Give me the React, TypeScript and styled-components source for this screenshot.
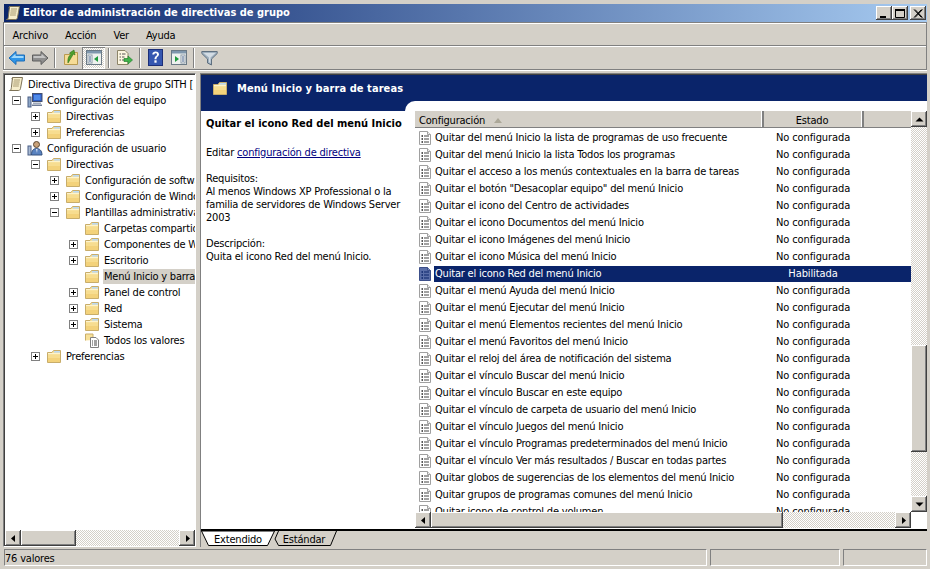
import React from 'react';
import styled, { createGlobalStyle, css } from 'styled-components';

const FONT = `"DejaVu Sans Condensed", "Noto Sans", "Liberation Sans", sans-serif`;

const Global = createGlobalStyle`
  html, body { margin: 0; padding: 0; background: #d4d0c8; }
  * { box-sizing: border-box; }
`;

const raised = css`
  background-color: #d4d0c8;
  box-shadow: inset -1px -1px 0 #404040, inset 1px 1px 0 #ffffff, inset -2px -2px 0 #808080, inset 2px 2px 0 #d4d0c8;
`;
const dither = css`
  background: repeating-conic-gradient(#d4d0c8 0 25%, #ffffff 0 50%) 0 0 / 2px 2px;
`;

const Window = styled.div`
  width: 930px; height: 569px; background: #d4d0c8; padding: 4px 3px 0 3px;
  display: flex; flex-direction: column; overflow: hidden;
  font-family: ${FONT}; font-size: 11px; letter-spacing: -0.2px; color: #000;
`;
const TitleBar = styled.div`
  height: 18px; margin-left: 1px; flex: none; display: flex; align-items: center; padding: 0 1px 0 1px;
  background: linear-gradient(90deg, #0a246a 0%, #a6caf0 100%);
`;
const TitleText = styled.span`
  color: #fff; font-weight: 700; font-size: 11px; letter-spacing: 0; margin-left: 2px; padding-bottom: 2px; flex: 1; white-space: nowrap;
`;
const CaptionBtn = styled.div`
  ${raised}; width: 16px; height: 14px; margin-left: ${p => (p.$gap ? 2 : 0)}px; display: flex; align-items: center; justify-content: center;
`;
const Bar = styled.div`
  height: 24px; flex: none; display: flex; align-items: center;
  border: 1px solid #808080; box-shadow: inset 1px 1px 0 #fff, 0 1px 0 #fff;
`;
const MenuBar = styled(Bar)`
  padding-left: 0;
`;
const MenuItem = styled.span`
  padding: 2px 8.5px 0; white-space: nowrap;
`;
const ToolBar = styled(Bar)`
  padding-left: 1px; border-top: none; height: 24px;
`;
const ToolBtn = styled.div`
  width: 23px; height: 22px; display: flex; align-items: center; justify-content: center;
  ${p => p.$pressed && css`
    ${dither};
    box-shadow: inset 1px 1px 0 #808080, inset -1px -1px 0 #fff;
  `}
`;
const ToolSep = styled.div`
  width: 2px; height: 20px; margin: 0 3px; border-left: 1px solid #808080; border-right: 1px solid #fff;
`;
const Main = styled.div`
  flex: none; height: 474px; margin-top: 3px; display: flex;
`;
const TreePane = styled.div`
  width: 193px; flex: none; display: flex; flex-direction: column;
  border: 1px solid #fff; border-top-color: #808080; border-left-color: #808080;
  box-shadow: inset 1px 1px 0 #404040;
  padding: 1px 0 0 1px;
`;
const TreeList = styled.div`
  flex: 1; background: #fff; padding-top: 1px; overflow: hidden;
`;
const TreeRow = styled.div`
  height: 16px; display: flex; align-items: center; white-space: nowrap;
  padding-left: ${p => (p.$level === 0 ? 3 : 7 + (p.$level - 1) * 19)}px;
`;
const ToggleSlot = styled.div`
  width: 9px; height: 9px; margin-right: 6px; flex: none; position: relative;
  ${p => p.$kind && css`
    border: 1px solid #808080; background: #fff;
    &::before { content: ''; position: absolute; left: 1px; top: 3px; width: 5px; height: 1px; background: #000; }
  `}
  ${p => p.$kind === 'plus' && css`
    &::after { content: ''; position: absolute; left: 3px; top: 1px; width: 1px; height: 5px; background: #000; }
  `}
`;
const TreeIcon = styled.div`
  width: 16px; height: 16px; flex: none; display: flex; align-items: center; justify-content: center;
`;
const TreeLabel = styled.span`
  margin-left: 3px; padding: 0 12px 0 1px; line-height: 15px; height: 15px; flex: ${p => (p.$sel ? 1 : 'none')};
  background: ${p => (p.$sel ? '#d4d0c8' : 'transparent')};
`;
const HScroll = styled.div`
  height: 16px; flex: none; display: flex; ${dither};
`;
const ArrowBtn = styled.div`
  ${raised}; width: 16px; height: 16px; flex: none; display: flex; align-items: center; justify-content: center;
`;
const HThumb = styled.div`
  ${raised}; height: 16px; flex: none; width: ${p => p.$w}px;
`;
const Spacer = styled.div`
  flex: 1;
`;
const Splitter = styled.div`
  width: 4px; flex: none;
`;
const RightPane = styled.div`
  flex: 1; min-width: 0; display: flex; flex-direction: column;
  border-left: 1px solid #808080; border-top: 1px solid #808080;
`;
const Banner = styled.div`
  height: 27px; flex: none; background: #0a246a; border-top: 1px solid #404040; display: flex; align-items: center;
  padding-left: 11px; color: #fff; font-weight: 700; font-size: 11px; letter-spacing: 0.07px;
`;
const BannerText = styled.span`
  margin-left: 9px; padding-top: 1px;
`;
const Body = styled.div`
  flex: none; height: 428px; display: flex;
`;
const DescPane = styled.div`
  width: 204px; flex: none; background: #fff; display: flex; flex-direction: column;
`;
const DescStrip = styled.div`
  height: 10px; background: #0a246a; flex: none;
`;
const DescContent = styled.div`
  padding: 6px 0 0 5px; line-height: 13px;
`;
const DescTitle = styled.div`
  font-weight: 700; letter-spacing: 0; white-space: nowrap;
`;
const DescPara = styled.div`
  margin-top: ${p => p.$mt}px;
`;
const DescLink = styled.a`
  color: #000080; text-decoration: underline;
`;
const ListOuter = styled.div`
  flex: 1; min-width: 0; background: #0a246a;
`;
const ListPanel = styled.div`
  height: 100%; background: #fff; border-top-left-radius: 10px; padding: 10px 0 0 10px; display: flex;
`;
const ListCol = styled.div`
  flex: 1; min-width: 0; display: flex; flex-direction: column; height: 417px;
`;
const Header = styled.div`
  height: 17px; flex: none; display: flex; background: #d4d0c8; border-bottom: 1px solid #808080;
`;
const HeadCell = styled.div`
  width: ${p => p.$w}px; flex: ${p => (p.$w ? 'none' : 1)}; display: flex; align-items: center;
  justify-content: ${p => (p.$center ? 'center' : 'flex-start')};
  padding: 3px ${p => (p.$center ? 2 : 0)}px 0 ${p => (p.$center ? 0 : 4)}px;
  border-right: ${p => (p.$last ? 'none' : '2px solid #808080')};
  box-shadow: ${p => (p.$last ? 'none' : 'inset -1px 0 0 #fff')};
`;
const SortMark = styled.span`
  width: 0; height: 0; margin-left: 9px; border-left: 4px solid transparent; border-right: 4px solid transparent; border-bottom: 5px solid #aca899;
`;
const Rows = styled.div`
  flex: 1; overflow: hidden; min-height: 0; padding-top: 1px;
`;
const Row = styled.div`
  height: 17px; display: flex; align-items: center; white-space: nowrap;
`;
const RowIcon = styled.div`
  width: 14px; height: 16px; margin-left: 3px; flex: none; display: flex; align-items: center; justify-content: center;
`;
const RowMain = styled.div`
  display: flex; flex: 1; height: 16px; align-items: center; margin-left: 2px; padding-left: 1px;
  background: ${p => (p.$sel ? '#0a246a' : 'transparent')};
  color: ${p => (p.$sel ? '#fff' : '#000')};
`;
const RowName = styled.span`
  width: 329px; flex: none;
`;
const RowStatus = styled.span`
  width: 98px; flex: none; text-align: center; letter-spacing: -0.1px;
`;
const VCol = styled.div`
  width: 16px; flex: none; display: flex; flex-direction: column; height: 401px;
`;
const VTrack = styled.div`
  flex: 1; display: flex; flex-direction: column; ${dither};
`;
const VThumb = styled.div`
  ${raised}; width: 16px; height: 107px; flex: none; margin-top: 218px;
`;
const TabStrip = styled.div`
  height: 18px; flex: none; border-top: 2px solid #000; display: flex; padding-left: 0;
`;
const Tab = styled.div`
  position: relative; height: 15px; width: ${p => p.$w}px; flex: none; margin-left: ${p => p.$ml || 0}px;
  display: flex; justify-content: center; align-items: center; padding-top: 2px;
`;
const TabShape = styled.svg`
  position: absolute; left: 0; top: 0;
`;
const TabLabel = styled.span`
  position: relative;
`;
const StatusBar = styled.div`
  display: flex; height: 17px; margin-top: 2px; flex: none; gap: 3px; padding: 0 0 0 1px;
`;
const StatusCell = styled.div`
  height: 17px; width: ${p => p.$w}px; flex: ${p => (p.$w ? 'none' : 1)};
  border: 1px solid #fff; border-top-color: #808080; border-left-color: #808080;
  display: flex; align-items: center; padding: 2px 0 0 0; white-space: nowrap;
`;

/* ---------- drawings ---------- */
const Folder = () => (
  <svg width="16" height="15" viewBox="0 0 16 15">
    <path d="M1.5 3.5V13.5H14.5V1.5H7.5L6 3.5Z" fill="#f8e19a" stroke="#c8ad6a" />
    <rect x="2" y="9" width="12" height="4" fill="#f3d27b" />
    <rect x="2" y="6" width="12" height="3" fill="#f7dd90" />
    <rect x="8" y="2" width="6" height="1.6" fill="#bcd9f2" />
    <rect x="2" y="4" width="12" height="1" fill="#fdf3cd" />
  </svg>
);
const Scroll = () => (
  <svg width="16" height="16" viewBox="0 0 16 16">
    <path d="M4.5 1.5H14.5L12.5 12.5C12 14.5 11 14.5 10 14.5H1.5C3 14.5 3.2 13 3.4 11.5Z" fill="#f6edcb" stroke="#7d7257" />
    <path d="M6 4H12M5.6 6H11.6M5.3 8H11.2M5 10H10.8" stroke="#a89a73" />
    <path d="M4.5 1.5C3.8 2 3.8 3.5 5 3.5" fill="none" stroke="#7d7257" />
  </svg>
);
const Computer = () => (
  <svg width="16" height="16" viewBox="0 0 16 16">
    <rect x="1" y="5" width="3" height="10" fill="#8fa8c8" stroke="#4a5f86" />
    <rect x="5.5" y="1.5" width="9.5" height="8" fill="#2c5bc4" stroke="#44506e" />
    <rect x="7" y="3" width="6.5" height="5" fill="#4f8ae8" />
    <path d="M6 10.5H14V12H6Z" fill="#9fa9bb" />
    <path d="M5 12.5H15V14H5Z" fill="#6f7c96" />
  </svg>
);
const UserIcon = () => (
  <svg width="16" height="16" viewBox="0 0 16 16">
    <rect x="1" y="6" width="3" height="9" fill="#a9bbd4" stroke="#4a5f86" />
    <circle cx="9.5" cy="4.5" r="3" fill="#c9a27a" stroke="#5b4630" />
    <path d="M4.5 15C4.5 10 7 8.5 9.5 8.5S15 10 15 15Z" fill="#5a83c0" stroke="#34507e" />
    <path d="M9 9H10.5L10 13Z" fill="#e8eef7" />
  </svg>
);
const ValuesIcon = () => (
  <svg width="16" height="16" viewBox="0 0 16 16">
    <path d="M1.5 8.5V2H9V8" fill="#f8e19a" stroke="#c8ad6a" />
    <path d="M6.5 5.5H12L14.5 8V15.5H6.5Z" fill="#fff" stroke="#808080" />
    <path d="M8 9H9M8 11H9M8 13H9M10 9H13M10 11H13M10 13H13" stroke="#444" />
  </svg>
);
const PolicyDoc = ({ sel }: { sel?: boolean }) => (
  <svg width="14" height="16" viewBox="0 0 14 16">
    <path d="M1.5 1.5H9.5L12.5 4.5V14.5H1.5Z" fill={sel ? '#5a6ea8' : '#fff'} stroke={sel ? '#3c4f8a' : '#a0a0a0'} />
    <path d="M9.5 1.5V4.5H12.5" fill={sel ? '#7a8cc0' : '#eee'} stroke={sel ? '#3c4f8a' : '#a0a0a0'} />
    <path d="M3.5 6H5M3.5 9H5M3.5 12H5" stroke={sel ? '#0a246a' : '#222'} strokeWidth="1.4" />
    <path d="M6 6H11M6 9H11M6 12H11" stroke={sel ? '#0a246a' : '#444'} />
  </svg>
);
const Tri = ({ dir }: { dir: 'l' | 'r' | 'u' | 'd' }) => {
  const d = { l: 'M6 1V8L2 4.5Z', r: 'M3 1V8L7 4.5Z', u: 'M0.5 6.5H8.5L4.5 2.5Z', d: 'M0.5 2.5H8.5L4.5 6.5Z' }[dir];
  return (
    <svg width="9" height="9" viewBox="0 0 9 9"><path d={d} fill="#000" /></svg>
  );
};
const ArrowIcon = ({ flip, c1, c2, line }: { flip?: boolean; c1: string; c2: string; line: string }) => (
  <svg width="18" height="16" viewBox="0 0 18 16" style={flip ? { transform: 'scaleX(-1)' } : undefined}>
    <path d="M1 8L8 1.5V5H16.5V11H8V14.5Z" fill={c1} stroke={line} strokeLinejoin="round" />
    <path d="M3 8L7.5 3.8V6H15.5V8H3Z" fill={c2} />
  </svg>
);
const UpFolder = () => (
  <svg width="16" height="17" viewBox="0 0 16 17">
    <path d="M1.5 5.5V15.5H14.5V3.5H8L7 5.5Z" fill="#f6dc96" stroke="#b89a50" />
    <path d="M5 14C4.5 9 6 6.5 8 5.5L6.5 4L11 1L12 6L10.5 5C9 7 7.5 10 5 14Z" fill="#4da02e" stroke="#2c7016" strokeWidth="0.6" />
  </svg>
);
const PaneLeft = ({ right }: { right?: boolean }) => (
  <svg width="16" height="15" viewBox="0 0 16 15">
    <rect x="0.5" y="0.5" width="15" height="14" fill="#eef1ee" stroke="#6b7a86" />
    <rect x="1" y="1" width="14" height="2.5" fill="#7f97ad" />
    {right ? (
      <>
        <rect x="10" y="5" width="4" height="8" fill="#fff" stroke="#8a9aa8" />
        <path d="M4 6L8 9L4 12Z" fill="#1f9b3c" />
        <path d="M11 7H13M11 9H13M11 11H13" stroke="#3c5b86" />
      </>
    ) : (
      <>
        <rect x="2" y="5" width="4" height="8" fill="#fff" stroke="#8a9aa8" />
        <path d="M12 6L8 9L12 12Z" fill="#1f9b3c" />
        <path d="M3 7H5M3 9H5M3 11H5" stroke="#3c5b86" />
      </>
    )}
  </svg>
);
const Export = () => (
  <svg width="17" height="17" viewBox="0 0 17 17">
    <path d="M1.5 1.5H9L12 4.5V15.5H1.5Z" fill="#fdf6e0" stroke="#8c8468" />
    <path d="M3.5 5H5M3.5 8H5M3.5 11H5M6 5H9.5M6 8H8.5M6 11H8.5" stroke="#555" />
    <path d="M8 9.5H12V7L16.5 11L12 15V12.5H8Z" fill="#3fb34a" stroke="#26832f" strokeWidth="0.7" />
  </svg>
);
const Help = () => (
  <svg width="15" height="17" viewBox="0 0 15 17">
    <rect x="0.5" y="0.5" width="14" height="16" fill="#3657b0" stroke="#1d2f78" />
    <path d="M4.3 5.5C4.3 3.2 6 2.5 7.6 2.5C9.6 2.5 11 3.6 11 5.3C11 7.6 8.5 7.6 8.5 10.2H6.5C6.5 7 9 7 9 5.4C9 4.6 8.4 4.2 7.6 4.2C6.7 4.2 6.3 4.8 6.3 5.5Z" fill="#fff" />
    <rect x="6.4" y="11.3" width="2.2" height="2.4" fill="#fff" />
  </svg>
);
const Funnel = () => (
  <svg width="17" height="16" viewBox="0 0 17 16">
    <path d="M0.8 1.5H16.2V3.5L10.5 9V15L6.5 13V9L0.8 3.5Z" fill="#9fb0bf" stroke="#5f7080" />
    <path d="M2.5 3H14.5L9.5 7.5V13L8 12.3V7.5Z" fill="#d3dce4" />
  </svg>
);

/* ---------- data ---------- */
type TreeItem = { level: number; toggle?: 'plus' | 'minus'; icon: 'scroll' | 'computer' | 'user' | 'folder' | 'values'; label: string; sel?: boolean };
const tree: TreeItem[] = [
  { level: 0, icon: 'scroll', label: 'Directiva Directiva de grupo SITH [' },
  { level: 1, toggle: 'minus', icon: 'computer', label: 'Configuración del equipo' },
  { level: 2, toggle: 'plus', icon: 'folder', label: 'Directivas' },
  { level: 2, toggle: 'plus', icon: 'folder', label: 'Preferencias' },
  { level: 1, toggle: 'minus', icon: 'user', label: 'Configuración de usuario' },
  { level: 2, toggle: 'minus', icon: 'folder', label: 'Directivas' },
  { level: 3, toggle: 'plus', icon: 'folder', label: 'Configuración de software' },
  { level: 3, toggle: 'plus', icon: 'folder', label: 'Configuración de Windows' },
  { level: 3, toggle: 'minus', icon: 'folder', label: 'Plantillas administrativas' },
  { level: 4, icon: 'folder', label: 'Carpetas compartidas' },
  { level: 4, toggle: 'plus', icon: 'folder', label: 'Componentes de Windows' },
  { level: 4, toggle: 'plus', icon: 'folder', label: 'Escritorio' },
  { level: 4, icon: 'folder', label: 'Menú Inicio y barra de tareas', sel: true },
  { level: 4, toggle: 'plus', icon: 'folder', label: 'Panel de control' },
  { level: 4, toggle: 'plus', icon: 'folder', label: 'Red' },
  { level: 4, toggle: 'plus', icon: 'folder', label: 'Sistema' },
  { level: 4, icon: 'values', label: 'Todos los valores' },
  { level: 2, toggle: 'plus', icon: 'folder', label: 'Preferencias' },
];
const icons = { scroll: Scroll, computer: Computer, user: UserIcon, folder: Folder, values: ValuesIcon };

const policies = [
  'Quitar del menú Inicio la lista de programas de uso frecuente',
  'Quitar del menú Inicio la lista Todos los programas',
  'Quitar el acceso a los menús contextuales en la barra de tareas',
  'Quitar el botón "Desacoplar equipo" del menú Inicio',
  'Quitar el icono del Centro de actividades',
  'Quitar el icono Documentos del menú Inicio',
  'Quitar el icono Imágenes del menú Inicio',
  'Quitar el icono Música del menú Inicio',
  'Quitar el icono Red del menú Inicio',
  'Quitar el menú Ayuda del menú Inicio',
  'Quitar el menú Ejecutar del menú Inicio',
  'Quitar el menú Elementos recientes del menú Inicio',
  'Quitar el menú Favoritos del menú Inicio',
  'Quitar el reloj del área de notificación del sistema',
  'Quitar el vínculo Buscar del menú Inicio',
  'Quitar el vínculo Buscar en este equipo',
  'Quitar el vínculo de carpeta de usuario del menú Inicio',
  'Quitar el vínculo Juegos del menú Inicio',
  'Quitar el vínculo Programas predeterminados del menú Inicio',
  'Quitar el vínculo Ver más resultados / Buscar en todas partes',
  'Quitar globos de sugerencias de los elementos del menú Inicio',
  'Quitar grupos de programas comunes del menú Inicio',
  'Quitar icono de control de volumen',
];

export default function App() {
  return (
    <Window>
      <Global />
      <TitleBar>
        <Scroll />
        <TitleText>Editor de administración de directivas de grupo</TitleText>
        <CaptionBtn>
          <svg width="10" height="9" viewBox="0 0 10 9"><rect x="1" y="7" width="6" height="2" fill="#000" /></svg>
        </CaptionBtn>
        <CaptionBtn>
          <svg width="10" height="9" viewBox="0 0 10 9"><path d="M0.5 1.5H9.5V8.5H0.5Z" fill="none" stroke="#000" /><rect x="0" y="0" width="10" height="2" fill="#000" /></svg>
        </CaptionBtn>
        <CaptionBtn $gap>
          <svg width="10" height="9" viewBox="0 0 10 9"><path d="M1 0.5L8.5 8.5M2 0.5L9.5 8.5M8.5 0.5L1 8.5M9.5 0.5L2 8.5" stroke="#000" /></svg>
        </CaptionBtn>
      </TitleBar>
      <MenuBar>
        <MenuItem>Archivo</MenuItem>
        <MenuItem>Acción</MenuItem>
        <MenuItem>Ver</MenuItem>
        <MenuItem>Ayuda</MenuItem>
      </MenuBar>
      <ToolBar>
        <ToolBtn><ArrowIcon c1="#2f95e8" c2="#9fd8fb" line="#1c6db8" /></ToolBtn>
        <ToolBtn><ArrowIcon flip c1="#8e8e8e" c2="#c4c4c4" line="#5e5e5e" /></ToolBtn>
        <ToolSep />
        <ToolBtn><UpFolder /></ToolBtn>
        <ToolBtn $pressed><PaneLeft /></ToolBtn>
        <ToolSep />
        <ToolBtn><Export /></ToolBtn>
        <ToolSep />
        <ToolBtn><Help /></ToolBtn>
        <ToolBtn><PaneLeft right /></ToolBtn>
        <ToolSep />
        <ToolBtn><Funnel /></ToolBtn>
      </ToolBar>
      <Main>
        <TreePane>
          <TreeList>
            {tree.map((t, i) => {
              const Ico = icons[t.icon];
              return (
                <TreeRow key={i} $level={t.level}>
                  {t.level > 0 && <ToggleSlot $kind={t.toggle} />}
                  <TreeIcon><Ico /></TreeIcon>
                  <TreeLabel $sel={t.sel}>{t.label}</TreeLabel>
                </TreeRow>
              );
            })}
          </TreeList>
          <HScroll>
            <ArrowBtn><Tri dir="l" /></ArrowBtn>
            <HThumb $w={55} />
            <Spacer />
            <ArrowBtn><Tri dir="r" /></ArrowBtn>
          </HScroll>
        </TreePane>
        <Splitter />
        <RightPane>
          <Banner>
            <Folder />
            <BannerText>Menú Inicio y barra de tareas</BannerText>
          </Banner>
          <Body>
            <DescPane>
              <DescStrip />
              <DescContent>
                <DescTitle>Quitar el icono Red del menú Inicio</DescTitle>
                <DescPara $mt={16}>Editar <DescLink>configuración de directiva</DescLink></DescPara>
                <DescPara $mt={13}>Requisitos:<br />Al menos Windows XP Professional o la<br />familia de servidores de Windows Server<br />2003</DescPara>
                <DescPara $mt={13}>Descripción:<br />Quita el icono Red del menú Inicio.</DescPara>
              </DescContent>
            </DescPane>
            <ListOuter>
              <ListPanel>
                <ListCol>
                  <Header>
                    <HeadCell $w={349}>Configuración<SortMark /></HeadCell>
                    <HeadCell $w={100} $center>Estado</HeadCell>
                    <HeadCell $last />
                  </Header>
                  <Rows>
                    {policies.map((p, i) => {
                      const sel = p === 'Quitar el icono Red del menú Inicio';
                      return (
                        <Row key={i}>
                          <RowIcon><PolicyDoc sel={sel} /></RowIcon>
                          <RowMain $sel={sel}>
                            <RowName>{p}</RowName>
                            <RowStatus>{sel ? 'Habilitada' : 'No configurada'}</RowStatus>
                          </RowMain>
                        </Row>
                      );
                    })}
                  </Rows>
                  <HScroll>
                    <ArrowBtn><Tri dir="l" /></ArrowBtn>
                    <HThumb $w={352} />
                    <Spacer />
                    <ArrowBtn><Tri dir="r" /></ArrowBtn>
                  </HScroll>
                </ListCol>
                <VCol>
                  <ArrowBtn><Tri dir="u" /></ArrowBtn>
                  <VTrack><VThumb /></VTrack>
                  <ArrowBtn><Tri dir="d" /></ArrowBtn>
                </VCol>
              </ListPanel>
            </ListOuter>
          </Body>
          <TabStrip>
            <Tab $w={74}>
              <TabShape width="74" height="15" viewBox="0 0 74 15">
                <path d="M0.5 0L7.5 14.5H66.5L73.5 0Z" fill="#fff" stroke="#000" />
              </TabShape>
              <TabLabel>Extendido</TabLabel>
            </Tab>
            <Tab $w={66} $ml={-4}>
              <TabShape width="66" height="15" viewBox="0 0 66 15">
                <path d="M4 8L7.5 14.5H59.5L65.5 0" fill="none" stroke="#000" />
                <path d="M4 8L7.5 0" fill="none" stroke="#000" />
              </TabShape>
              <TabLabel>Estándar</TabLabel>
            </Tab>
          </TabStrip>
        </RightPane>
      </Main>
      <StatusBar>
        <StatusCell $w={703}>76 valores</StatusCell>
        <StatusCell $w={130} />
        <StatusCell />
      </StatusBar>
    </Window>
  );
}
